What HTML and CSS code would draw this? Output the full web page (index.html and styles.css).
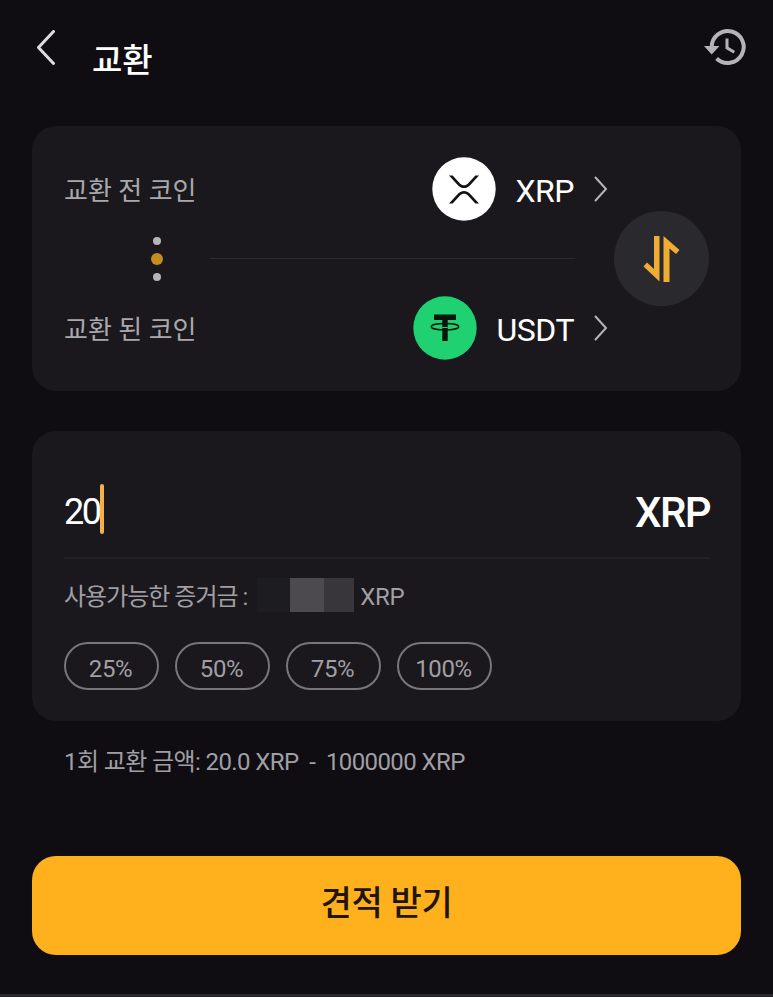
FILE: index.html
```
<!DOCTYPE html>
<html lang="ko">
<head>
    <meta charset="UTF-8">
    <meta name="viewport" content="width=device-width, initial-scale=1.0">
    <title>교환</title>
    <link rel="stylesheet" href="styles.css">
</head>
<body>
    <header class="header">
        <svg class="back-icon" width="20" height="36" viewBox="0 0 20 36">
            <path d="M17.500 1.500 2.500 17.500l15 16" fill="none" stroke="#dedce2" stroke-width="3" stroke-linecap="round" stroke-linejoin="round"/>
        </svg>
        <h1 class="title">교환</h1>
        <svg class="history-icon" width="42" height="38" viewBox="0 0 42 38">
            <path d="M7.700 19A16 16 0 1 1 12.600 30.500" fill="none" stroke="#b4b3b7" stroke-width="4"/>
            <path d="M0 18h15.500L7.700 26.500z" fill="#b4b3b7"/>
            <path d="M23 10.500v9.300l7.300 4.500" fill="none" stroke="#b4b3b7" stroke-width="3"/>
        </svg>
    </header>

    <section class="card coins">
        <div class="coin-list">
            <div class="coin-row">
                <span class="coin-label">교환 전 코인</span>
                <svg class="coin-icon" width="64" height="64" viewBox="0 0 64 64">
                    <circle cx="32" cy="32" r="31.700" fill="#fff"/>
                    <path d="M17 18.500h3.600l7.400 8c2.200 2.400 5.800 2.400 8 0l7.400-8H47l-9.200 10c-3.200 3.400-8.400 3.400-11.600 0zM17 46.500l9.200-10c3.200-3.400 8.400-3.400 11.600 0l9.200 10h-3.600l-7.400-8c-2.200-2.400-5.800-2.400-8 0l-7.400 8z" fill="#111"/>
                </svg>
                <span class="coin-name">XRP</span>
                <svg class="arrow" width="14" height="26" viewBox="0 0 14 26">
                    <path d="M1.500 1.500 12 13 1.500 24.500" fill="none" stroke="#b5b4b9" stroke-width="2" stroke-linecap="round"/>
                </svg>
            </div>
            <div class="middle">
                <div class="dots">
                    <span class="dot"></span>
                    <span class="dot active"></span>
                    <span class="dot"></span>
                </div>
                <div class="line"></div>
            </div>
            <div class="coin-row">
                <span class="coin-label">교환 된 코인</span>
                <svg class="coin-icon" width="64" height="64" viewBox="0 0 64 64">
                    <circle cx="32" cy="32" r="31.700" fill="#1fd171"/>
                    <path d="M21 18.500h22v5.500h-8.300v21h-5.400V24H21z" fill="#07150d"/>
                    <ellipse cx="32" cy="30.700" rx="13.700" ry="3.200" fill="none" stroke="#07150d" stroke-width="1.400"/>
                    <path d="M29.300 31.500h5.400" stroke="#1fd171" stroke-width="1"/>
                </svg>
                <span class="coin-name">USDT</span>
                <svg class="arrow" width="14" height="26" viewBox="0 0 14 26">
                    <path d="M1.500 1.500 12 13 1.500 24.500" fill="none" stroke="#b5b4b9" stroke-width="2" stroke-linecap="round"/>
                </svg>
            </div>
        </div>
        <div class="swap">
            <svg width="36" height="46" viewBox="0 0 36 46">
                <path d="M10 0h5.500v45.500L-.500 30.500l3.500-4 7 6.500zM19.500 0l16 14-3.500 4-6.500-5.500V46h-6z" fill="#f0ad33"/>
            </svg>
        </div>
    </section>

    <section class="card amount">
        <div class="amount-row">
            <div class="amount-value"><span>20</span><i class="caret"></i></div>
            <span class="amount-unit">XRP</span>
        </div>
        <div class="balance">
            <span class="balance-label">사용가능한 증거금 :</span>
            <div class="mask"><i></i><i></i><i></i></div>
            <span class="balance-unit">XRP</span>
        </div>
        <div class="percents">
            <button class="percent">25%</button>
            <button class="percent">50%</button>
            <button class="percent">75%</button>
            <button class="percent">100%</button>
        </div>
    </section>

    <p class="limit">1회 교환 금액: 20.0 XRP &nbsp;-&nbsp; 1000000 XRP</p>

    <button class="submit">견적 받기</button>
    <div class="bottom-bar"></div>
</body>
</html>
```
FILE: styles.css
```
* {
    box-sizing: border-box;
}
body {
    margin: 0;
    height: 997px;
    display: flex;
    flex-direction: column;
    overflow: hidden;
    background-color: #0f0c12;
    color: #fff;
    font-family: Roboto, "Noto Sans CJK KR", sans-serif;
}
button {
    padding: 0;
    font-family: inherit;
    cursor: pointer;
}
svg {
    display: block;
    flex-shrink: 0;
}
.header {
    display: flex;
    align-items: flex-start;
    height: 126px;
    padding: 28px 27px 0 36px;
}
.back-icon {
    margin-top: 2px;
}
.title {
    margin: 9px 0 0 36px;
    font-size: 33px;
    line-height: 48px;
    font-weight: 500;
}
.history-icon {
    margin-left: auto;
}
.card {
    margin: 0 32px;
    border-radius: 24px;
    background-color: #1a181c;
}
.coins {
    display: flex;
    align-items: center;
    justify-content: space-between;
    height: 265px;
    padding: 0 32px;
}
.coin-list {
    width: 544px;
}
.coin-row {
    display: flex;
    align-items: center;
    height: 64px;
}
.coin-label {
    margin-right: auto;
    padding-bottom: 2px;
    font-size: 26px;
    color: #a9a8ac;
}
.coin-name {
    margin: 4px 20px 0 20px;
    font-size: 32px;
    letter-spacing: -0.5px;
}
.middle {
    display: flex;
    align-items: center;
    height: 75px;
    padding: 0 33px 0 86px;
}
.dots {
    display: flex;
    flex-direction: column;
    align-items: center;
    gap: 8px;
    width: 13px;
}
.dot {
    width: 8px;
    height: 8px;
    border-radius: 50%;
    background-color: #b5b4b9;
}
.dot.active {
    width: 12px;
    height: 12px;
    background-color: #c38d20;
}
.line {
    flex: 1;
    height: 1px;
    margin-left: 47px;
    background-color: #2a292d;
}
.swap {
    display: flex;
    align-items: center;
    justify-content: center;
    width: 95px;
    height: 95px;
    border-radius: 50%;
    background-color: #2a292e;
}
.swap svg {
    overflow: visible;
}
.amount {
    height: 290px;
    margin-top: 40px;
    padding: 32px 31px 0 32px;
}
.amount-row {
    display: flex;
    align-items: center;
    justify-content: space-between;
    height: 96px;
    padding-bottom: 2px;
    border-bottom: 2px solid #222126;
}
.amount-value {
    display: flex;
    align-items: center;
    font-size: 36px;
    letter-spacing: -2.4px;
}
.amount-value span {
    padding-top: 5px;
}
.caret {
    width: 4px;
    height: 50px;
    border-radius: 2px;
    background-color: #f3b04a;
}
.amount-unit {
    padding-top: 6px;
    font-size: 42px;
    font-weight: 500;
    letter-spacing: -1.6px;
}
.balance {
    display: flex;
    align-items: center;
    height: 74px;
    padding-bottom: 2px;
    font-size: 24px;
    color: #a09fa4;
}
.balance-label {
    padding-bottom: 1px;
    letter-spacing: -1px;
}
.balance-unit {
    padding-top: 3px;
    letter-spacing: -0.3px;
}
.mask {
    display: flex;
    height: 34px;
    margin: 0 6px 0 10px;
}
.mask i {
    width: 33px;
    background-color: #1d1c20;
}
.mask i:nth-child(2) {
    width: 34px;
    background-color: #4c4a4f;
}
.mask i:nth-child(3) {
    width: 30px;
    background-color: #38363b;
}
.percents {
    display: flex;
    gap: 16px;
    margin-top: 9px;
}
.percent {
    width: 95px;
    height: 48px;
    padding: 5px 2px 0 0;
    border: 2px solid #77767b;
    border-radius: 24px;
    background: none;
    color: #a09fa4;
    font-size: 24px;
    letter-spacing: -0.4px;
}
.limit {
    margin: 23px 64px 0;
    font-size: 24px;
    line-height: 36px;
    letter-spacing: -0.6px;
    color: #a09fa4;
}
.submit {
    height: 99px;
    margin: 76px 32px 0;
    padding-bottom: 10px;
    border: none;
    border-radius: 24px;
    background-color: #ffb01d;
    color: #21150a;
    font-size: 34px;
    font-weight: 500;
    letter-spacing: -0.3px;
}
.bottom-bar {
    height: 3px;
    margin-top: auto;
    background-color: #29272c;
}
```
